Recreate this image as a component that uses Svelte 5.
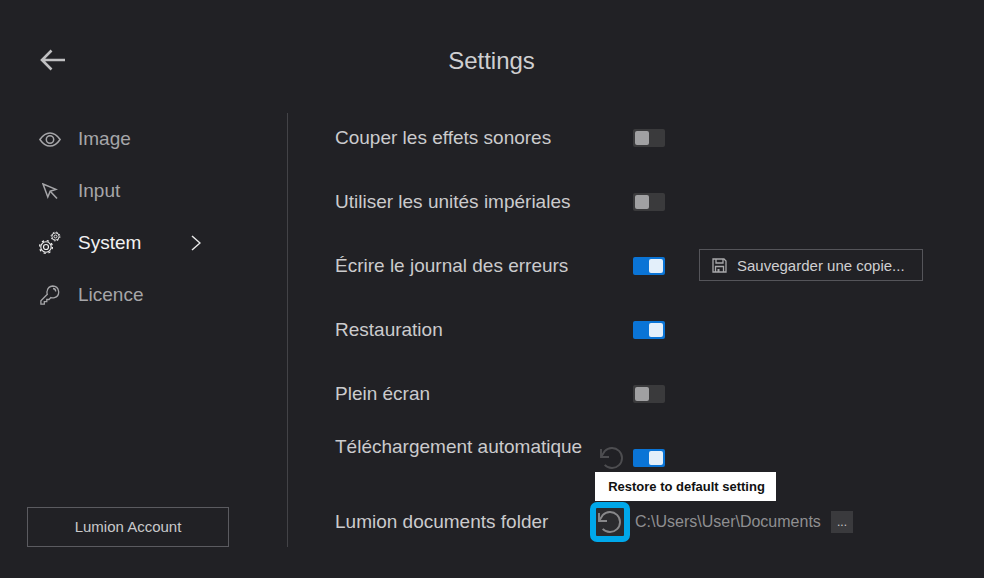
<script>
  const nav = [
    { id: 'image', label: 'Image' },
    { id: 'input', label: 'Input' },
    { id: 'system', label: 'System', active: true },
    { id: 'licence', label: 'Licence' }
  ];
  const rows = [
    { label: 'Couper les effets sonores', on: false },
    { label: 'Utiliser les unités impériales', on: false },
    { label: 'Écrire le journal des erreurs', on: true, save: true },
    { label: 'Restauration', on: true },
    { label: 'Plein écran', on: false },
    { label: 'Téléchargement automatique', on: true, restore: true }
  ];
</script>

{#snippet restoreIcon()}
  <svg class="restore" viewBox="0 0 24 24" width="24" height="24" fill="none" stroke="currentColor" stroke-width="1.900">
    <path d="M1 3v8h8" />
    <path d="M1 11 4.700 5.200A10 10 0 1 1 4.700 18.800" />
  </svg>
{/snippet}

<div class="page">
  <header class="head">
    <button class="back" aria-label="Back">
      <svg viewBox="0 0 26 22" width="26" height="22" fill="none" stroke="currentColor" stroke-width="2.600">
        <path d="M25 11H2M11.500 1.500 2 11l9.500 9.500" />
      </svg>
    </button>
    <h1>Settings</h1>
  </header>

  <div class="body">
    <aside class="side">
      <nav class="nav">
        {#each nav as item}
          <div class="nav-item" class:active={item.active}>
            <span class="nav-icon">
              {#if item.id === 'image'}
                <svg viewBox="0 0 22 15" width="22" height="15" fill="none" stroke="currentColor" stroke-width="1.500">
                  <path d="M.9 7.500C4 3 7.400 .9 11 .9S18 3 21.100 7.500C18 12 14.600 14.100 11 14.100S4 12 .9 7.500Z" />
                  <circle cx="11" cy="7.500" r="3.700" />
                </svg>
              {:else if item.id === 'input'}
                <svg class="cursor" viewBox="0 0 16 17" width="16" height="17" fill="none" stroke="currentColor" stroke-width="1.500">
                  <path d="M1 1 14 6.400 8.200 8.200 5.800 14Z" />
                  <path d="M8.200 8.200 15 15.500" />
                </svg>
              {:else if item.id === 'system'}
                <svg viewBox="0 0 22 24" width="22" height="24" fill="none" stroke="currentColor">
                  <g>
                    <circle cx="7" cy="16" r="5.200" stroke-width="1.100" />
                    <circle cx="7" cy="16" r="6.400" stroke-width="1.300" stroke-dasharray="2.200 2.830" />
                    <circle cx="7" cy="16" r="2.500" stroke-width="1.200" />
                  </g>
                  <g>
                    <circle cx="16.500" cy="5.500" r="3.600" stroke-width=".9" />
                    <circle cx="16.500" cy="5.500" r="4.400" stroke-width="1" stroke-dasharray="1.600 1.860" />
                    <circle cx="16.500" cy="5.500" r="1.500" stroke-width=".9" />
                  </g>
                </svg>
              {:else}
                <svg class="key" viewBox="0 0 20 20" width="20" height="20" fill="none" stroke="currentColor" stroke-width="1.300">
                  <path d="M12.700 1a6 6 0 0 1 1.800 11.700c-1.200.4-2.500.3-3.600-.1L9 14.500H6.800v2.200H4.300v2.500H.9v-3.500L7.300 9.300c-.4-1.100-.5-2.200-.1-3.400A6 6 0 0 1 12.700 1Z" />
                  <path d="M13 3.500a3 3 0 0 1 2.700 3" />
                </svg>
              {/if}
            </span>
            <span class="nav-label">{item.label}</span>
            {#if item.active}
              <svg class="chev" viewBox="0 0 10 16" width="10" height="16" fill="none" stroke="currentColor" stroke-width="1.500">
                <path d="M1 1l8 7-8 7" />
              </svg>
            {/if}
          </div>
        {/each}
      </nav>
      <button class="account">Lumion Account</button>
    </aside>

    <main class="main">
      <div class="list">
        {#each rows as row}
          <div class="row">
            <span class="label" class:raised={row.restore}>{row.label}</span>
            {#if row.restore}
              <span class="ghost">{@render restoreIcon()}</span>
            {/if}
            <span class="toggle" class:on={row.on}><span class="knob"></span></span>
            {#if row.save}
              <button class="save">
                <svg viewBox="0 0 15 15" width="15" height="15" fill="none" stroke="currentColor" stroke-width="1.300">
                  <path d="M1 1h11l2 2v11H1Z" />
                  <path d="M4 1v4h7V1M3.500 14V8.500h8V14" />
                  <path d="M5.500 11h2v3h-2Z" fill="currentColor" stroke="none" />
                </svg>
                Sauvegarder une copie...
              </button>
            {/if}
          </div>
        {/each}
        <div class="row folder">
          <span class="label">Lumion documents folder</span>
          <span class="focus">
            {@render restoreIcon()}
            <span class="tip">Restore to default setting</span>
          </span>
          <span class="path">C:\Users\User\Documents</span>
          <span class="dots">...</span>
        </div>
      </div>
    </main>
  </div>
</div>

<style>
  :global(body) {
    margin: 0;
    background: #212125;
  }
  .page {
    width: 984px;
    height: 578px;
    background: #212125;
    font-family: "Liberation Sans", Arial, sans-serif;
    color: #c8c8ca;
    overflow: hidden;
    box-sizing: border-box;
  }
  .head {
    height: 113px;
    display: flex;
    align-items: center;
    justify-content: center;
    padding-top: 9px;
    box-sizing: border-box;
    position: relative;
  }
  .head h1 {
    margin: 0 1px 0 0;
    font-size: 24px;
    font-weight: 400;
    color: #cfcfd1;
  }
  .back {
    position: absolute;
    left: 40px;
    top: 49px;
    padding: 0;
    background: none;
    border: 0;
    color: #c0c0c2;
    display: flex;
  }
  .body {
    display: flex;
    height: 434px;
  }
  .side {
    width: 287px;
    box-sizing: border-box;
    padding-left: 27px;
    display: flex;
    flex-direction: column;
    justify-content: space-between;
  }
  .nav {
    display: flex;
    flex-direction: column;
  }
  .nav-item {
    height: 52px;
    display: flex;
    align-items: center;
    font-size: 19px;
    color: #a6a6a9;
  }
  .nav-item.active {
    color: #f2f2f3;
  }
  .nav-icon {
    width: 51px;
    padding-left: 12px;
    box-sizing: border-box;
    display: flex;
    align-items: center;
    color: #a6a6a9;
  }
  .active .nav-icon {
    color: #f0f0f0;
  }
  .cursor {
    margin-left: 3px;
  }
  .key {
    margin-left: 1px;
  }
  .nav-label {
    width: 113px;
  }
  .chev {
    color: #e8e8e8;
  }
  .account {
    width: 202px;
    height: 40px;
    background: none;
    border: 1px solid #5b5b60;
    color: #c9c9cb;
    font: 15px "Liberation Sans", Arial, sans-serif;
    padding: 0 0 2px;
  }
  .main {
    flex: 1;
    border-left: 1px solid #434347;
    padding-left: 47px;
  }
  .list {
    display: flex;
    flex-direction: column;
    margin-top: -7px;
  }
  .row {
    height: 64px;
    display: flex;
    align-items: center;
    flex: none;
  }
  .label {
    width: 298px;
    flex: none;
    font-size: 19px;
    color: #cbcbcd;
  }
  .label.raised {
    width: 265px;
    margin-top: -22px;
  }
  .ghost {
    color: #4d4d50;
    display: flex;
    margin-right: 9px;
  }
  .restore {
    width: 24px;
    height: 24px;
    display: block;
  }
  .toggle {
    width: 32px;
    height: 18px;
    background: #3a3a3c;
    border-radius: 2px;
    display: flex;
    align-items: center;
    padding: 0 2px;
    box-sizing: border-box;
    flex: none;
  }
  .toggle .knob {
    width: 14px;
    height: 14px;
    background: #a0a0a2;
    border-radius: 2px;
  }
  .toggle.on {
    background: #0a74d6;
    justify-content: flex-end;
  }
  .toggle.on .knob {
    background: #e3effa;
  }
  .save {
    margin-left: 34px;
    margin-top: -2px;
    width: 224px;
    height: 32px;
    background: none;
    border: 1px solid #55555a;
    color: #cfcfd1;
    font: 15px "Liberation Sans", Arial, sans-serif;
    display: flex;
    align-items: center;
    gap: 10px;
    padding: 0 0 0 12px;
    box-sizing: border-box;
  }
  .save svg {
    color: #a8a8aa;
  }
  .folder .label {
    width: 255px;
  }
  .focus {
    position: relative;
    width: 40px;
    height: 40px;
    box-sizing: border-box;
    border: 6px solid #00a8ea;
    border-radius: 7px;
    background: #2b2b2e;
    color: #88888a;
    display: flex;
    align-items: center;
    justify-content: center;
    margin-right: 5px;
  }
  .tip {
    position: absolute;
    left: -1px;
    top: -36px;
    width: 181px;
    height: 29px;
    padding-left: 2px;
    box-sizing: border-box;
    background: #fff;
    color: #111;
    font-size: 13px;
    font-weight: 700;
    display: flex;
    align-items: center;
    justify-content: center;
    white-space: nowrap;
  }
  .path {
    font-size: 16px;
    color: #8f8f91;
    width: 196px;
  }
  .dots {
    width: 22px;
    height: 22px;
    background: #3a3a3d;
    color: #c8c8ca;
    font-size: 12px;
    display: flex;
    align-items: center;
    justify-content: center;
  }
</style>
